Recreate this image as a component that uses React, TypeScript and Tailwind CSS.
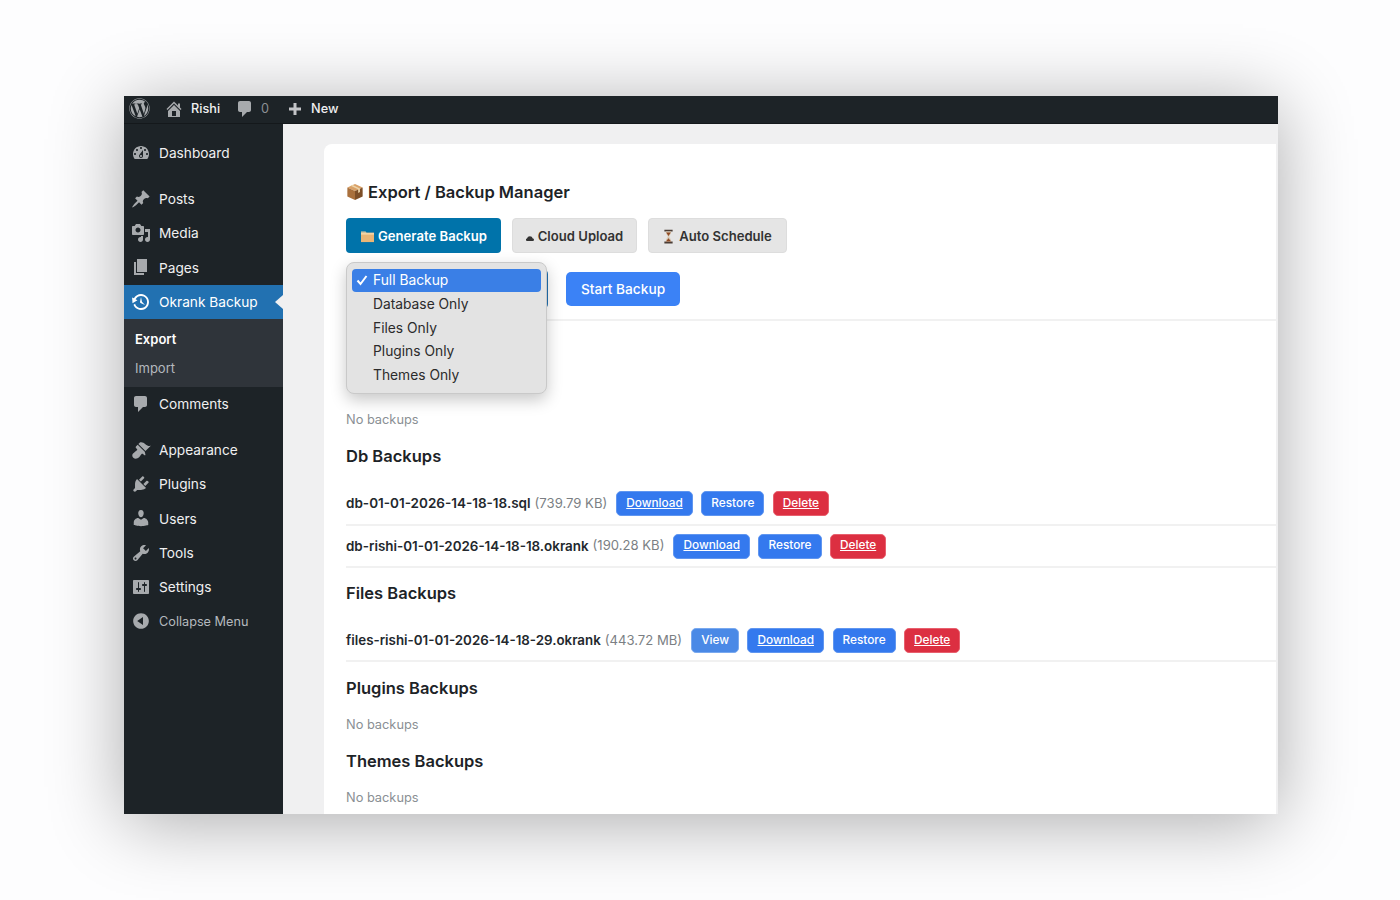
import { FaWordpress } from "react-icons/fa";

const P: Record<string, string> = {
  dashboard: "M3.76 16h12.48c1.1-1.37 1.76-3.11 1.76-5 0-4.42-3.58-8-8-8s-8 3.58-8 8c0 1.89.66 3.63 1.76 5zM10 4c.55 0 1 .45 1 1s-.45 1-1 1-1-.45-1-1 .45-1 1-1zM6 6c.55 0 1 .45 1 1s-.45 1-1 1-1-.45-1-1 .45-1 1-1zm8 0c.55 0 1 .45 1 1s-.45 1-1 1-1-.45-1-1 .45-1 1-1zm-5.37 5.55L12 7v6c0 1.1-.9 2-2 2s-2-.9-2-2c0-.57.24-1.08.63-1.45zM4 10c.55 0 1 .45 1 1s-.45 1-1 1-1-.45-1-1 .45-1 1-1zm12 0c.55 0 1 .45 1 1s-.45 1-1 1-1-.45-1-1 .45-1 1-1zm-5 3c0-.55-.45-1-1-1s-1 .45-1 1 .45 1 1 1 1-.45 1-1z",
  post: "M10.44 3.02l1.82-1.82 6.36 6.35-1.83 1.82c-1.05-.68-2.48-.57-3.41.36l-.75.75c-.92.93-1.04 2.35-.35 3.41l-1.83 1.82-2.41-2.41-2.8 2.79c-.42.42-3.38 2.71-3.8 2.29s1.86-3.39 2.28-3.81l2.79-2.79L4.1 9.36l1.83-1.82c1.05.69 2.48.57 3.4-.36l.75-.75c.93-.92 1.05-2.35.36-3.41z",
  media: "M13 11V4c0-.55-.45-1-1-1h-1.67L9 1H5L3.67 3H2c-.55 0-1 .45-1 1v7c0 .55.45 1 1 1h10c.55 0 1-.45 1-1zM7 4.5c1.38 0 2.5 1.12 2.5 2.5S8.38 9.5 7 9.5 4.5 8.38 4.5 7 5.62 4.5 7 4.5zM14 6h5v10.5c0 1.38-1.12 2.5-2.5 2.5S14 17.88 14 16.5s1.12-2.5 2.5-2.5c.17 0 .34.02.5.05V9h-3V6zm-4 8.05V13h2v3.5c0 1.38-1.12 2.5-2.5 2.5S7 17.88 7 16.5 8.12 14 9.5 14c.17 0 .34.02.5.05z",
  page: "M6 15V2h10v13H6zm-1 1h8v2H3V5h2v11z",
  backup: "M13.65 2.88c3.93 2.01 5.48 6.84 3.47 10.77s-6.83 5.48-10.77 3.47c-1.87-.96-3.2-2.56-3.86-4.4l1.64-1.03c.45 1.57 1.52 2.95 3.08 3.76 3.01 1.54 6.69.35 8.23-2.66 1.55-3.01.36-6.69-2.65-8.24C9.78 3.01 6.1 4.2 4.56 7.21l1.88.97-4.95 3.08-.39-5.82 1.78.91C4.9 2.4 9.75.89 13.65 2.88zm-4.36 7.83C9.11 10.53 9 10.28 9 10c0-.07.03-.12.04-.19h-.01L10 5l.97 4.81L14 13l-4.5-2.12.02-.02c-.08-.04-.16-.09-.23-.15z",
  comments: "M5 2h9c1.1 0 2 .9 2 2v7c0 1.1-.9 2-2 2h-2l-5 5v-5H5c-1.1 0-2-.9-2-2V4c0-1.1.9-2 2-2z",
  appearance: "M14.48 11.06L7.41 3.99l1.5-1.5c.5-.56 2.3-.47 3.51.32 1.21.8 1.43 1.28 2.91 2.1 1.18.64 2.45 1.26 4.45.85zm-.71.71L6.7 4.7 4.93 6.47c-.39.39-.39 1.02 0 1.41l1.06 1.06c.39.39.39 1.03 0 1.42-.6.6-1.43 1.11-2.21 1.69-.35.26-.7.53-1.01.84C1.43 13.23.5 15.85 2.3 17.65s4.42.87 5.78-.47c.31-.31.58-.66.85-1.02.57-.78 1.08-1.6 1.69-2.21.39-.39 1.02-.39 1.41 0l1.06 1.06c.39.39 1.02.39 1.41 0z",
  plugins: "M13.11 4.36L9.87 7.6 8 5.73l3.24-3.24c.35-.34 1.05-.2 1.56.32.52.51.66 1.21.31 1.55zm-8 1.77l.91-1.12 9.01 9.01-1.19.84c-.71.71-2.63 1.16-3.82 1.16H6.14L4.9 17.26c-.59.59-1.54.59-2.12 0-.59-.58-.59-1.53 0-2.12l1.24-1.24v-3.88c0-1.13.4-3.19 1.09-3.89zm7.26 3.97l3.24-3.24c.34-.35 1.04-.21 1.55.31.52.51.66 1.21.31 1.55l-3.24 3.25z",
  users: "M10 9.25c-2.27 0-2.73-3.44-2.73-3.44C7 4.02 7.82 2 9.97 2c2.16 0 2.98 2.02 2.71 3.81 0 0-.41 3.44-2.68 3.44zm0 2.57L12.72 10c2.39 0 4.52 2.33 4.52 4.53v2.49s-3.65 1.13-7.24 1.13c-3.65 0-7.24-1.13-7.24-1.13v-2.49c0-2.25 1.94-4.48 4.47-4.48z",
  tools: "M16.68 9.77c-1.34 1.34-3.3 1.67-4.95.99l-5.41 6.52c-.99.99-2.59.99-3.58 0s-.99-2.59 0-3.57l6.52-5.42c-.68-1.65-.35-3.61.99-4.95 1.28-1.28 3.12-1.62 4.72-1.06l-2.89 2.89 2.82 2.82 2.86-2.87c.53 1.58.18 3.39-1.08 4.65zM3.81 16.21c.4.39 1.04.39 1.43 0 .4-.4.4-1.04 0-1.43-.39-.4-1.03-.4-1.43 0-.39.39-.39 1.03 0 1.43z",
  settings: "M18 16V4c0-.55-.45-1-1-1H3c-.55 0-1 .45-1 1v12c0 .55.45 1 1 1h14c.55 0 1-.45 1-1zM8 11h1c.55 0 1 .45 1 1s-.45 1-1 1H8v1.5c0 .28-.22.5-.5.5s-.5-.22-.5-.5V13H6c-.55 0-1-.45-1-1s.45-1 1-1h1V5.5c0-.28.22-.5.5-.5s.5.22.5.5V11zm5-2h-1c-.55 0-1-.45-1-1s.45-1 1-1h1V5.5c0-.28.22-.5.5-.5s.5.22.5.5V7h1c.55 0 1 .45 1 1s-.45 1-1 1h-1v5.5c0 .28-.22.5-.5.5s-.5-.22-.5-.5V9z",
  collapse: "M10 2.16c4.33 0 7.84 3.51 7.84 7.84s-3.51 7.84-7.84 7.84S2.16 14.33 2.16 10 5.71 2.16 10 2.16zm2 11.72V6.12L6.18 9.97z",
  home: "M16 8.5l1.53 1.53-1.06 1.06L10 4.62l-6.47 6.47-1.06-1.06L10 2.5l4 4v-2h2v4zm-6-2.46l6 5.99V18H4v-5.97zM12 17v-5H8v5h4z",
  plus: "M11.5 4v4.5H16v3h-4.5V16h-3v-4.5H4v-3h4.5V4z",
};

function Dash({ name, className }: { name: string; className: string }) {
  return (
    <svg viewBox="0 0 20 20" fill="currentColor" fillRule="evenodd" className={className}>
      <path d={P[name]} />
    </svg>
  );
}

function BoxEmoji({ className }: { className: string }) {
  return (
    <svg viewBox="0 0 20 20" className={className}>
      <path d="M10 1 18.5 5 10 9 1.5 5z" fill="#d9a066" />
      <path d="M1.5 5 10 9v10l-8.5-4z" fill="#a9703c" />
      <path d="M18.5 5 10 9v10l8.5-4z" fill="#7d4f28" />
      <path d="M5 3 13.5 7v4l2-1V6L7 2z" fill="#ecd3a8" />
    </svg>
  );
}

function FolderEmoji() {
  return (
    <svg viewBox="0 0 16 14" className="w-[15px] h-[13px] shrink-0">
      <path d="M1 3h14v10H1z" fill="#eab676" />
      <path d="M1 1.5h5L7 3H1z" fill="#f2cf9c" />
      <path d="M1 3h14v2H1z" fill="#f5d5a6" />
    </svg>
  );
}

function Hourglass() {
  return (
    <svg viewBox="0 0 12 16" className="w-[11px] h-[15px] shrink-0">
      <path d="M1.5 .5h9v2h-9zM1.5 13.5h9v2h-9z" fill="#4a3d35" />
      <path d="M3 2.5h6c0 3-2 4-2.2 5.500C7 9.500 9 10.500 9 13.500H3c0-3 2-4 2.200-5.500C5 6.500 3 5.500 3 2.500z" fill="#d9c9b4" />
      <path d="M3.500 3.500h5L6 7.500zM3.200 13.500 6 9.800l2.800 3.700z" fill="#8f4a24" />
    </svg>
  );
}

function MenuRow({ icon, label, active, dim }: { icon: string; label: string; active?: boolean; dim?: boolean }) {
  return (
    <li
      className={`relative flex items-center h-[34.4px] pl-[7px] ${active ? "bg-[#2271b1] text-white" : dim ? "text-[#b4b9be]" : "text-[#f0f0f1]"}`}
    >
      <Dash name={icon} className={`w-[20px] h-[20px] shrink-0 ${active ? "text-white" : "text-[#a7aaad]"}`} />
      <span className={`ml-[8px] ${dim ? "text-[12.700px]" : "text-[13.700px] pt-[1px]"}`}>{label}</span>
      {active && (
        <span className="absolute right-0 top-[10px] w-0 h-0 border-y-[7px] border-y-transparent border-r-[8px] border-r-[#f0f0f1]" />
      )}
    </li>
  );
}

function Heading({ children, className }: { children: string; className: string }) {
  return <h3 className={`h-[24px] text-[16.500px] leading-[22px] font-semibold text-[#1d2327] ${className}`}>{children}</h3>;
}

function Empty({ className }: { className: string }) {
  return <p className={`text-[12.800px] leading-[20px] text-[#8a8f94] ${className}`}>No backups</p>;
}

function Act({ label, kind, underline }: { label: string; kind: "blue" | "view" | "red"; underline?: boolean }) {
  const c =
    kind === "red"
      ? "bg-[#dc2f41] border-[#e8606e]"
      : kind === "view"
        ? "bg-[#4a89e6] border-[#79a9ef]"
        : "bg-[#3479ee] border-[#6096f0]";
  return (
    <span
      className={`h-[25px] px-[9px] flex items-center rounded-[5px] border text-white text-[11.800px] font-medium ${c} ${underline ? "underline" : ""}`}
    >
      {label}
    </span>
  );
}

function FileRow({ name, size, view, className, nameSize }: { name: string; size: string; view?: boolean; className: string; nameSize: string }) {
  return (
    <div className={`flex items-center border-b-2 border-[#f1f1f1] ${className}`}>
      <span className={`font-semibold text-[#23282d] ${nameSize}`}>{name}</span>
      <span className="ml-[4px] text-[13.100px] text-[#7b7f84]">{size}</span>
      <div className="ml-[9px] flex gap-[8.500px]">
        {view && <Act label="View" kind="view" />}
        <Act label="Download" kind="blue" underline />
        <Act label="Restore" kind="blue" />
        <Act label="Delete" kind="red" underline />
      </div>
    </div>
  );
}

export default function App() {
  return (
    <div
      className="min-h-screen w-full overflow-hidden bg-[#fdfdfe] pt-[96px] pl-[124px]"
      style={{ fontFamily: "Inter, 'Liberation Sans', sans-serif" }}
    >
      <div className="w-[1154px] h-[718px] overflow-hidden flex flex-col bg-[#f0f0f1] shadow-[0_8px_70px_rgba(0,0,0,0.33)]">
        <header className="h-[28px] shrink-0 bg-[#1d2327] border-b border-[#14181b] pb-[2px] flex items-center text-[12.700px] text-[#f0f0f1] font-medium">
          <FaWordpress className="ml-[5px] w-[21px] h-[21px] text-[#a7aaad]" />
          <Dash name="home" className="ml-[14px] w-[20px] h-[20px] text-[#a7aaad]" />
          <span className="ml-[7px]">Rishi</span>
          <Dash name="comments" className="ml-[15px] w-[20px] h-[20px] text-[#a7aaad]" />
          <span className="ml-[6px] text-[#8c8f94] font-normal">0</span>
          <Dash name="plus" className="ml-[16px] w-[20px] h-[20px] text-[#c3c4c7]" />
          <span className="ml-[6px]">New</span>
        </header>
        <div className="flex-1 flex min-h-0">
          <aside className="w-[159px] shrink-0 bg-[#1d2327] pt-[12px]">
            <ul>
              <MenuRow icon="dashboard" label="Dashboard" />
              <li className="h-[11px]" />
              <MenuRow icon="post" label="Posts" />
              <MenuRow icon="media" label="Media" />
              <MenuRow icon="page" label="Pages" />
              <MenuRow icon="backup" label="Okrank Backup" active />
              <li className="bg-[#2f343a] h-[68px] pl-[11px] pt-[10px] text-[13px]">
                <div className="h-[20px] leading-[20px] font-semibold text-white">Export</div>
                <div className="mt-[9px] h-[20px] leading-[20px] text-[#b4b9be]">Import</div>
              </li>
              <MenuRow icon="comments" label="Comments" />
              <li className="h-[11px]" />
              <MenuRow icon="appearance" label="Appearance" />
              <MenuRow icon="plugins" label="Plugins" />
              <MenuRow icon="users" label="Users" />
              <MenuRow icon="tools" label="Tools" />
              <MenuRow icon="settings" label="Settings" />
              <MenuRow icon="collapse" label="Collapse Menu" dim />
            </ul>
          </aside>
          <main className="flex-1 min-w-0 pl-[41px] pr-[2px] pt-[20px]">
            <div className="relative h-[700px] bg-white rounded-tl-[8px] pl-[22px] pt-[36px]">
              <h2 className="h-[24px] flex items-center gap-[4px] text-[16.500px] font-semibold text-[#1d2327]">
                <BoxEmoji className="w-[18px] h-[18px] shrink-0" />
                Export / Backup Manager
              </h2>
              <div className="mt-[14px] flex gap-[11px] text-[13.100px] font-semibold">
                <span className="h-[35px] w-[155px] pt-[2px] flex items-center justify-center gap-[3px] rounded-[4px] bg-[#0073aa] text-white">
                  <FolderEmoji />
                  Generate Backup
                </span>
                <span className="h-[35px] w-[125px] pt-[2px] flex items-center justify-center gap-[4px] rounded-[4px] bg-[#e5e5e5] border border-[#dddddd] text-[#333]">
                  <svg viewBox="0 0 10 6" className="w-[8px] h-[5px] mt-[4px] shrink-0">
                    <path d="M1.500 6a1.500 1.500 0 0 1-.3-3A3.800 3.800 0 0 1 8.500 3 1.500 1.500 0 0 1 8.500 6z" fill="#333" />
                  </svg>
                  Cloud Upload
                </span>
                <span className="h-[35px] w-[139px] pt-[2px] flex items-center justify-center gap-[5px] rounded-[4px] bg-[#e5e5e5] border border-[#dddddd] text-[#333]">
                  <Hourglass />
                  Auto Schedule
                </span>
              </div>
              <div className="mt-[19px] flex gap-[18px] items-start border-b-2 border-[#f1f1f1] h-[49px]">
                <span className="h-[40px] w-[202px] -mt-[3px] rounded-[5px] border-2 border-[#2271b1] bg-white" />
                <span className="h-[34px] w-[114px] flex items-center justify-center rounded-[5px] bg-[#3b82f6] text-white text-[13.700px] font-medium">
                  Start Backup
                </span>
              </div>

              <div className="absolute left-[22px] top-[118px] w-[201px] h-[132px] rounded-[8px] border border-[#c9c9c9] bg-[#e3e3e3] shadow-[0_6px_16px_rgba(0,0,0,0.22)] px-[5px] pt-[5.500px] text-[13.800px] text-[#2b2b2b]">
                <div className="h-[23.800px] flex items-center rounded-[4px] bg-[#3a7fe6] text-white">
                  <svg viewBox="0 0 12 12" className="ml-[4px] w-[12px] h-[12px] shrink-0" fill="none" stroke="white" strokeWidth="2">
                    <path d="M1.500 6.500 4.500 10 10.500 2" />
                  </svg>
                  <span className="ml-[5px]">Full Backup</span>
                </div>
                {["Database Only", "Files Only", "Plugins Only", "Themes Only"].map((o) => (
                  <div key={o} className="h-[23.800px] flex items-center pl-[21px]">
                    {o}
                  </div>
                ))}
              </div>

              <Empty className="mt-[89px]" />
              <Heading className="mt-[15px]">Db Backups</Heading>
              <FileRow className="mt-[14px] h-[43px]" nameSize="text-[13.500px]" name="db-01-01-2026-14-18-18.sql" size="(739.79 KB)" />
              <FileRow className="h-[42px]" nameSize="text-[13.400px]" name="db-rishi-01-01-2026-14-18-18.okrank" size="(190.28 KB)" />
              <Heading className="mt-[14px]">Files Backups</Heading>
              <FileRow className="mt-[15px] h-[41px]" nameSize="text-[13.350px]" name="files-rishi-01-01-2026-14-18-29.okrank" size="(443.72 MB)" view />
              <Heading className="mt-[15px]">Plugins Backups</Heading>
              <Empty className="mt-[14px]" />
              <Heading className="mt-[15px]">Themes Backups</Heading>
              <Empty className="mt-[14px]" />
            </div>
          </main>
        </div>
      </div>
    </div>
  );
}
